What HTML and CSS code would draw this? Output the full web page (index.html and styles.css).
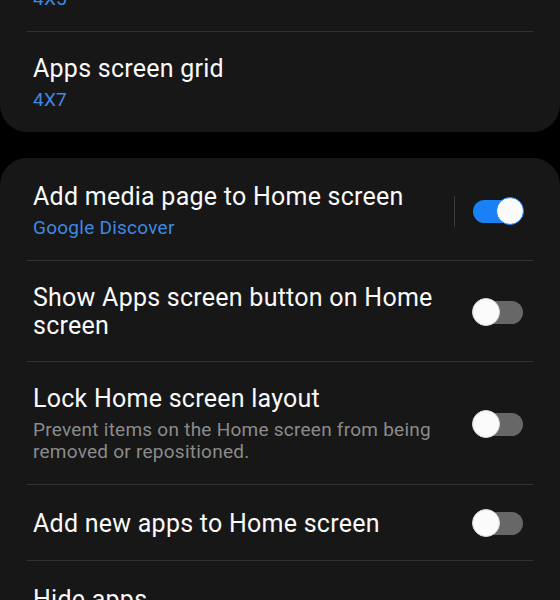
FILE: index.html
```html
<!DOCTYPE html>
<html lang="en">
<head>
  <meta charset="UTF-8" />
  <title>Home screen settings</title>
  <link rel="stylesheet" href="styles.css">
</head>
<body>

  <div class="page">

    <div class="card">
      <div class="row">
        <div class="text">
          <div class="title">Home screen grid</div>
          <div class="sub blue">4X5</div>
        </div>
      </div>
      <div class="row">
        <div class="text">
          <div class="title">Apps screen grid</div>
          <div class="sub blue">4X7</div>
        </div>
      </div>
    </div>

    <div class="card">
      <div class="row">
        <div class="text">
          <div class="title">Add media page to Home screen</div>
          <div class="sub blue">Google Discover</div>
        </div>
        <div class="widget">
          <span class="sep"></span>
          <span class="switch on"><span class="thumb"></span></span>
        </div>
      </div>
      <div class="row">
        <div class="text">
          <div class="title">Show Apps screen button on Home screen</div>
        </div>
        <div class="widget">
          <span class="switch"><span class="thumb"></span></span>
        </div>
      </div>
      <div class="row">
        <div class="text">
          <div class="title">Lock Home screen layout</div>
          <div class="sub">Prevent items on the Home screen from being removed or repositioned.</div>
        </div>
        <div class="widget">
          <span class="switch"><span class="thumb"></span></span>
        </div>
      </div>
      <div class="row">
        <div class="text">
          <div class="title">Add new apps to Home screen</div>
        </div>
        <div class="widget">
          <span class="switch"><span class="thumb"></span></span>
        </div>
      </div>
      <div class="row">
        <div class="text">
          <div class="title">Hide apps</div>
        </div>
      </div>
    </div>

  </div>

</body>
</html>
```

FILE: styles.css
```css
html, body {
  margin: 0;
  background: #000;
  overflow: hidden;
}
body {
  font-family: Roboto, "Noto Sans", sans-serif;
  color: #fafafa;
  letter-spacing: 0.25px;
}
.page {
  margin-top: -71px;
}
.card {
  background: #171717;
  border-radius: 27px;
  padding: 2px 27px 0;
  margin-bottom: 26px;
}
.row {
  display: flex;
  align-items: center;
  box-sizing: border-box;
  min-height: 76px;
  padding: 23px 10px 21px 6px;
}
.row + .row {
  border-top: 1px solid #313131;
}
.text {
  flex: 1;
  min-width: 0;
  padding-right: 20px;
}
.title {
  font-size: 25px;
  line-height: 28px;
}
.sub {
  font-size: 19px;
  line-height: 22px;
  margin-top: 6px;
  color: #8b8b8b;
}
.sub.blue {
  color: #3f88e2;
}
.widget {
  display: flex;
  align-items: center;
  gap: 18px;
}
.sep {
  width: 1px;
  height: 31px;
  background: #3a3a3a;
}
.switch {
  position: relative;
  width: 50px;
  height: 23px;
  border-radius: 12px;
  background: #676767;
}
.switch .thumb {
  position: absolute;
  left: -1px;
  top: -3px;
  width: 26px;
  height: 26px;
  border-radius: 50%;
  background: #fbfbfb;
  border: 1.5px solid #d8d8d8;
}
.switch.on {
  background: #1a80f5;
}
.switch.on .thumb {
  left: auto;
  right: -1px;
  border-color: #1a80f5;
}
```
